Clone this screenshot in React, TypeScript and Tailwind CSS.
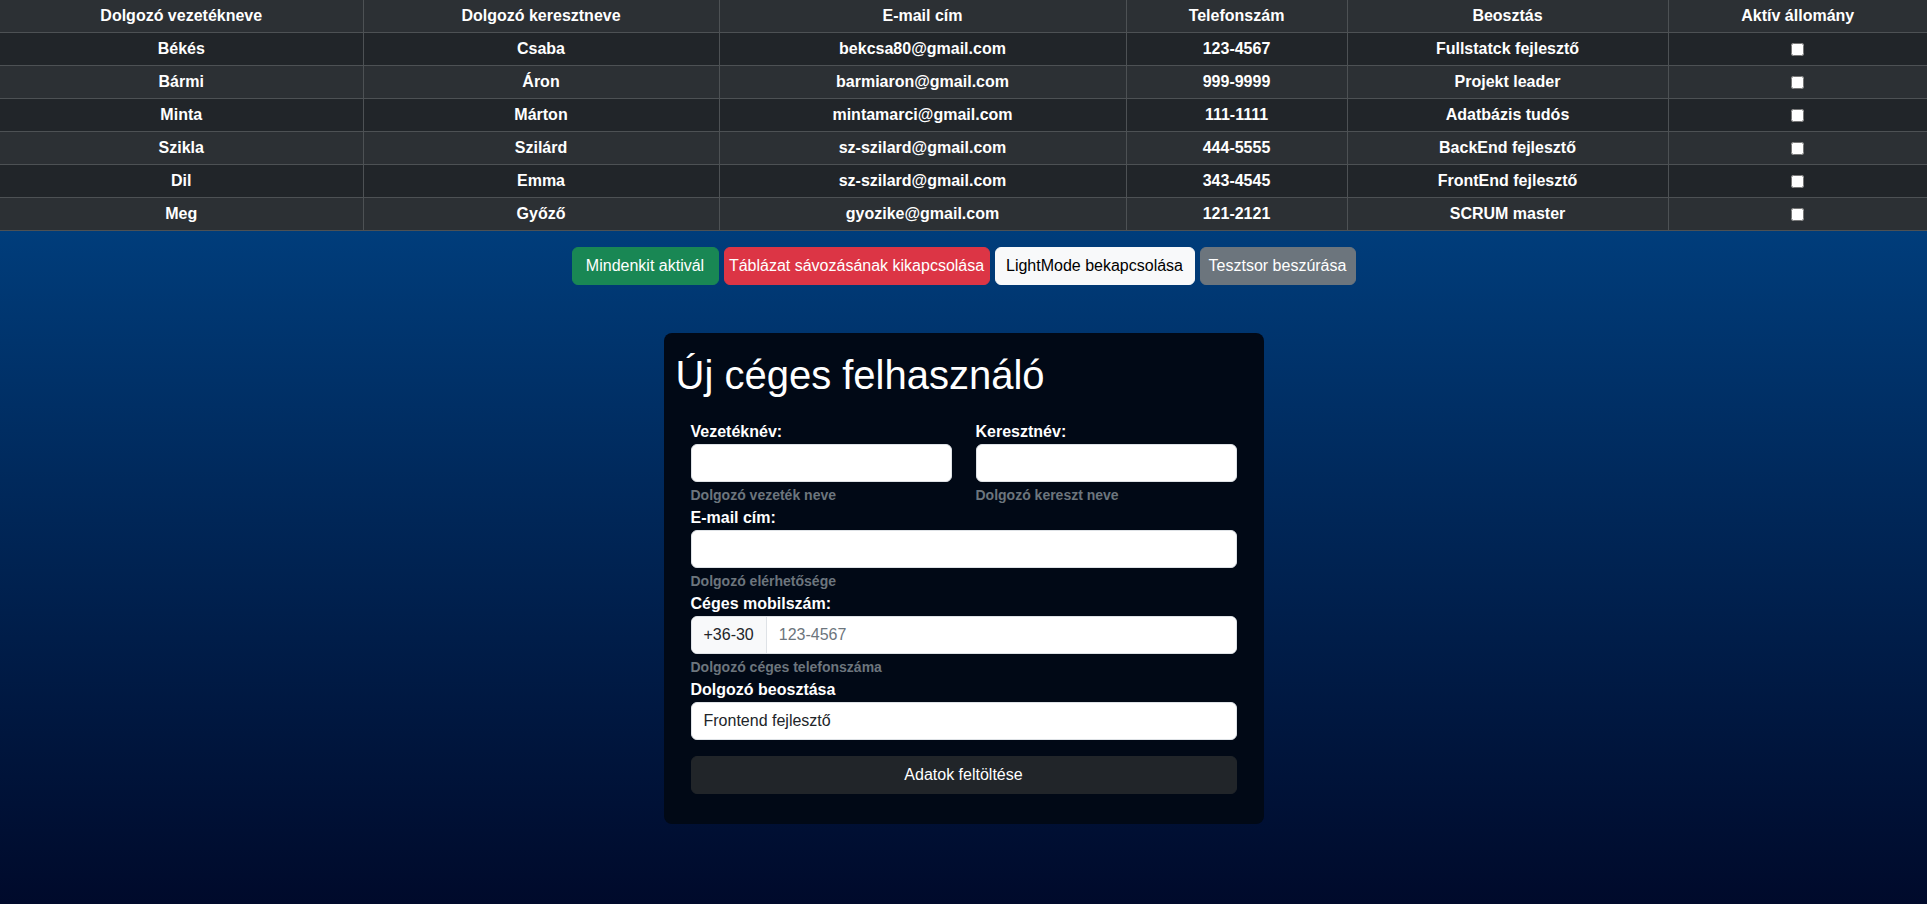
const rows = [
  ["Békés", "Csaba", "bekcsa80@gmail.com", "123-4567", "Fullstatck fejlesztő"],
  ["Bármi", "Áron", "barmiaron@gmail.com", "999-9999", "Projekt leader"],
  ["Minta", "Márton", "mintamarci@gmail.com", "111-1111", "Adatbázis tudós"],
  ["Szikla", "Szilárd", "sz-szilard@gmail.com", "444-5555", "BackEnd fejlesztő"],
  ["Dil", "Emma", "sz-szilard@gmail.com", "343-4545", "FrontEnd fejlesztő"],
  ["Meg", "Győző", "gyozike@gmail.com", "121-2121", "SCRUM master"],
];

const headers = [
  "Dolgozó vezetékneve",
  "Dolgozó keresztneve",
  "E-mail cím",
  "Telefonszám",
  "Beosztás",
  "Aktív állomány",
];

function Field({ label, help, children }: { label: string; help?: string; children: React.ReactNode }) {
  return (
    <div className="flex flex-col">
      <label className="text-base leading-6 font-bold text-white">{label}</label>
      {children}
      {help && (
        <div className="mt-[3px] text-sm leading-[21px] font-bold text-[#6c757d]">{help}</div>
      )}
    </div>
  );
}

const inputCls =
  "h-[38px] w-full rounded-[6px] border border-[#dee2e6] bg-white px-3 text-base text-[#212529] outline-none placeholder:text-[#6c757d]";

export default function App() {
  return (
    <div className="flex min-h-screen flex-col bg-[#000b2e] font-['Liberation_Sans',Arial,sans-serif] text-white">
      {/* Dolgozók táblázat */}
      <table className="w-full table-fixed border-collapse text-center text-base font-bold">
        <colgroup>
          <col className="w-[363px]" />
          <col className="w-[356px]" />
          <col className="w-[407px]" />
          <col className="w-[221px]" />
          <col className="w-[321px]" />
          <col className="w-[259px]" />
        </colgroup>
        <thead>
          <tr className="bg-[#2c3034]">
            {headers.map((h, i) => (
              <th
                key={h}
                className={`border-b border-[#4d5154] px-2 py-1 leading-6 ${i > 0 ? "border-l" : ""}`}
              >
                {h}
              </th>
            ))}
          </tr>
        </thead>
        <tbody>
          {rows.map((r, ri) => (
            <tr key={ri} className={ri % 2 === 0 ? "bg-[#212529]" : "bg-[#2c3034]"}>
              {r.map((c, ci) => (
                <td
                  key={ci}
                  className={`border-b border-[#4d5154] px-2 py-1 leading-6 ${ci > 0 ? "border-l" : ""}`}
                >
                  {c}
                </td>
              ))}
              <td className="border-b border-l border-[#4d5154] px-2 py-1 leading-6">
                <input type="checkbox" readOnly className="m-0 h-[13px] w-[13px] align-middle" />
              </td>
            </tr>
          ))}
        </tbody>
      </table>

      {/* Gradiens háttér + vezérlők + űrlap */}
      <div className="flex-1 bg-gradient-to-b from-[#003d7b] to-[#000a2b] pb-[80px]">
        <div className="mt-4 flex justify-center gap-[5px] text-base leading-6 font-normal whitespace-nowrap">
          <button className="w-[147px] rounded-[6px] border border-[#198754] bg-[#198754] py-1.5 text-white">
            Mindenkit aktivál
          </button>
          <button className="w-[266px] rounded-[6px] border border-[#dc3545] bg-[#dc3545] py-1.5 text-white">
            Táblázat sávozásának kikapcsolása
          </button>
          <button className="w-[200px] rounded-[6px] border border-[#f8f9fa] bg-[#f8f9fa] py-1.5 text-black">
            LightMode bekapcsolása
          </button>
          <button className="w-[156px] rounded-[6px] border border-[#6c757d] bg-[#6c757d] py-1.5 text-white">
            Tesztsor beszúrása
          </button>
        </div>

        <div className="mx-auto mt-12 w-[600px] rounded-lg bg-[#010916] pl-[12px] pr-[10px] pt-[18px] pb-[30px]">
          <h1 className="text-[40px] leading-[48px] font-normal text-white">Új céges felhasználó</h1>
          <form className="mt-[21px] flex flex-col pl-[15px] pr-[17px]">
            <div className="grid grid-cols-2 gap-x-6">
              <Field label="Vezetéknév:" help="Dolgozó vezeték neve">
                <input className={inputCls} />
              </Field>
              <Field label="Keresztnév:" help="Dolgozó kereszt neve">
                <input className={inputCls} />
              </Field>
            </div>
            <Field label="E-mail cím:" help="Dolgozó elérhetősége">
              <input className={inputCls} />
            </Field>
            <Field label="Céges mobilszám:" help="Dolgozó céges telefonszáma">
              <div className="flex h-[38px] w-full overflow-hidden rounded-[6px] border border-[#dee2e6] bg-white">
                <span className="flex items-center border-r border-[#dee2e6] bg-[#f8f9fa] px-3 text-base text-[#212529]">
                  +36-30
                </span>
                <input
                  placeholder="123-4567"
                  className="h-full flex-1 bg-white px-3 text-base text-[#212529] outline-none placeholder:text-[#6c757d]"
                />
              </div>
            </Field>
            <Field label="Dolgozó beosztása">
              <input className={inputCls} defaultValue="Frontend fejlesztő" />
            </Field>
            <button
              type="button"
              className="mt-4 h-[38px] w-full rounded-[6px] border border-[#212529] bg-[#212529] text-base leading-6 text-white"
            >
              Adatok feltöltése
            </button>
          </form>
        </div>
      </div>
    </div>
  );
}
